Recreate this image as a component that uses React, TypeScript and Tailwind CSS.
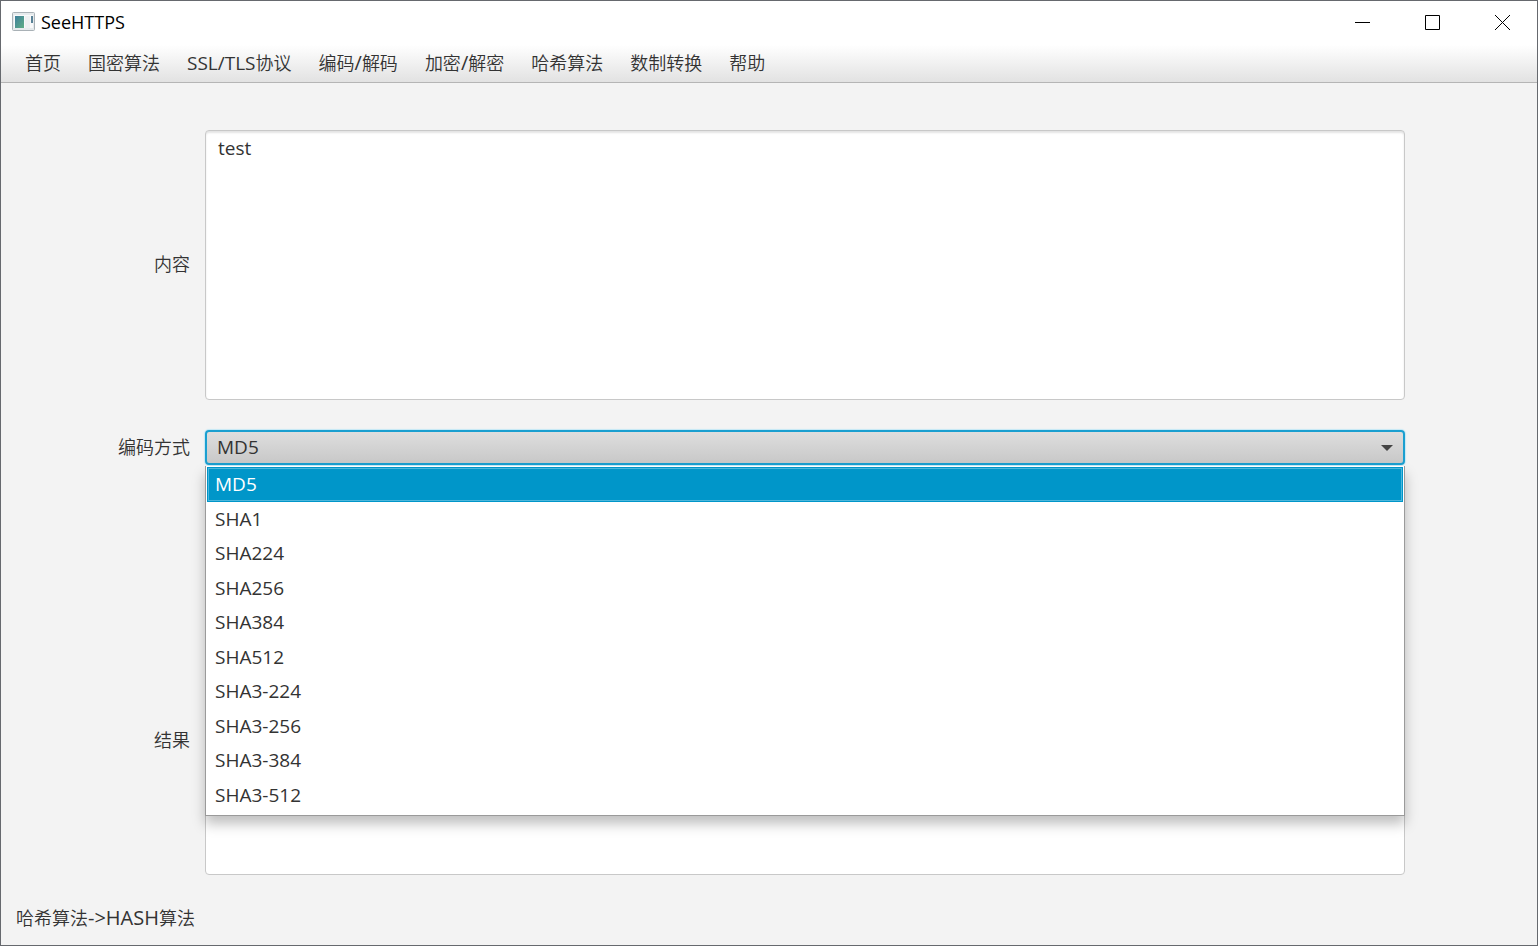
import { useState } from 'react'
import clsx from 'clsx'

const menus = [
  { id: 'home', label: '首页' },
  { id: 'gm', label: '国密算法' },
  { id: 'tls', label: <><span className="text-[19px] font-normal">SSL/TLS</span>协议</> },
  { id: 'encode', label: <>编码<span className="text-xl leading-6 font-normal">/</span>解码</> },
  { id: 'encrypt', label: <>加密<span className="text-xl leading-6 font-normal">/</span>解密</> },
  { id: 'hash', label: '哈希算法' },
  { id: 'radix', label: '数制转换' },
  { id: 'help', label: '帮助' },
]

const algorithms = [
  'MD5',
  'SHA1',
  'SHA224',
  'SHA256',
  'SHA384',
  'SHA512',
  'SHA3-224',
  'SHA3-256',
  'SHA3-384',
  'SHA3-512',
]

const textareaClass =
  'block h-[270px] w-full resize-none rounded-[4px] border border-[#c8c8c8] bg-white px-3 py-[3px] text-[19px] leading-7 outline-none'

const AppIcon = () => (
  <svg width="24" height="20" viewBox="0 0 24 20" aria-hidden="true">
    <defs>
      <linearGradient id="pane" x1="0" y1="0" x2="1" y2="1">
        <stop offset="0" stopColor="#3f7f9c" />
        <stop offset="1" stopColor="#5fae84" />
      </linearGradient>
    </defs>
    <rect x="0.5" y="0.5" width="22" height="18" rx="1" fill="#e6eaec" stroke="#a9b1b6" />
    <rect x="2" y="3" width="19" height="13" fill="#f8f9fa" />
    <rect x="3" y="4" width="9" height="12" fill="url(#pane)" />
    <rect x="13" y="4" width="5" height="12" fill="#eef0f1" />
    <rect x="19" y="4" width="2" height="7" fill="#5a8297" />
  </svg>
)

const TitleBar = () => (
  <header className="flex h-11 items-center bg-white pb-0.5">
    <div className="flex flex-1 items-center gap-[5px] pl-[11px] text-black">
      <AppIcon />
      <h1 className="text-lg leading-6">SeeHTTPS</h1>
    </div>
    <button type="button" aria-label="最小化" className="flex h-full w-[70px] items-center justify-center">
      <svg width="15" height="15" viewBox="0 0 15 15" stroke="#000">
        <path d="M0 7.5h15" />
      </svg>
    </button>
    <button type="button" aria-label="最大化" className="flex h-full w-[70px] items-center justify-center">
      <svg width="15" height="15" viewBox="0 0 15 15" fill="none" stroke="#000">
        <path d="M.5 .5h14v14H.5z" />
      </svg>
    </button>
    <button type="button" aria-label="关闭" className="flex h-full w-[70px] items-center justify-center">
      <svg width="15" height="15" viewBox="0 0 15 15" stroke="#000">
        <path d="M0 0l15 15M15 0L0 15" />
      </svg>
    </button>
  </header>
)

const MenuBar = () => (
  <nav className="flex h-[38px] items-center gap-px border-b border-[#b5b5b5] bg-linear-to-b from-white to-[#e2e2e2] pb-0.5 pl-[11px]">
    {menus.map((menu) => (
      <button key={menu.id} type="button" className="px-[13px] text-lg leading-6 font-[350] whitespace-nowrap">
        {menu.label}
      </button>
    ))}
  </nav>
)

const App = () => {
  const [content, setContent] = useState('test')
  const [algorithm, setAlgorithm] = useState('MD5')
  const [open, setOpen] = useState(true)

  return (
    <div className="flex min-h-screen flex-col border border-[#66696e] bg-[#f3f3f3] font-['Open_Sans','Noto_Sans_CJK_SC',sans-serif] text-[#333]">
      <TitleBar />
      <MenuBar />
      <main className="grid flex-1 grid-cols-[auto_1fr] content-start items-center gap-x-[15px] pt-[47px] pr-[132px] pl-[117px] text-lg leading-6">
        <label htmlFor="content" className="pb-0.5 text-right font-[350]">内容</label>
        <textarea
          id="content"
          value={content}
          onChange={(e) => setContent(e.target.value)}
          className={clsx(textareaClass, 'shadow-[inset_0_2px_2px_#e4e4e4]')}
        />

        <label htmlFor="algorithm" className="mt-[30px] pb-0.5 text-right font-[350]">编码方式</label>
        <div className="relative z-10 mt-[30px]">
          <select
            id="algorithm"
            value={algorithm}
            onChange={(e) => setAlgorithm(e.target.value)}
            onMouseDown={(e) => {
              e.preventDefault()
              setOpen(!open)
            }}
            className="block h-[35px] w-full appearance-none rounded-[4px] border-2 border-[#1a9fd0] bg-linear-to-b from-[#dedede] to-[#c8c8c8] px-[10px] pb-0.5 text-[19px] leading-7 shadow-[0_0_1px_1px_#c4e8f5] outline-none"
          >
            {algorithms.map((name) => (
              <option key={name}>{name}</option>
            ))}
          </select>
          <svg width="12" height="6" viewBox="0 0 12 6" className="pointer-events-none absolute top-[15px] right-3" fill="#444">
            <path d="M0 0h12L6 6z" />
          </svg>

          {open && (
            <ul
              role="listbox"
              aria-label="编码方式"
              className="absolute inset-x-0 top-full mt-px grid h-[350px] auto-rows-fr border-x border-b border-[#9a9a9a] bg-white px-px pt-px pb-[3px] shadow-[0_8px_12px_rgba(0,0,0,0.25)]"
            >
              {algorithms.map((name) => (
                <li
                  key={name}
                  role="option"
                  aria-selected={name === algorithm}
                  onClick={() => {
                    setAlgorithm(name)
                    setOpen(false)
                  }}
                  className={clsx(
                    'flex items-center px-2 text-[19px] leading-7',
                    name === algorithm && 'bg-[#0096c9] text-white outline outline-[#4db6db] -outline-offset-2',
                  )}
                >
                  {name}
                </li>
              ))}
            </ul>
          )}
        </div>

        <label htmlFor="result" className="mt-[140px] text-right font-[350]">结果</label>
        <div className="mt-[140px]">
          <textarea id="result" readOnly className={textareaClass} />
        </div>
      </main>
      <footer className="px-[15px] pt-[30px] pb-[15px] text-lg leading-6 font-[350]">
        哈希算法<span className="text-xl leading-6 font-normal">-&gt;HASH</span>算法
      </footer>
    </div>
  )
}

export default App
